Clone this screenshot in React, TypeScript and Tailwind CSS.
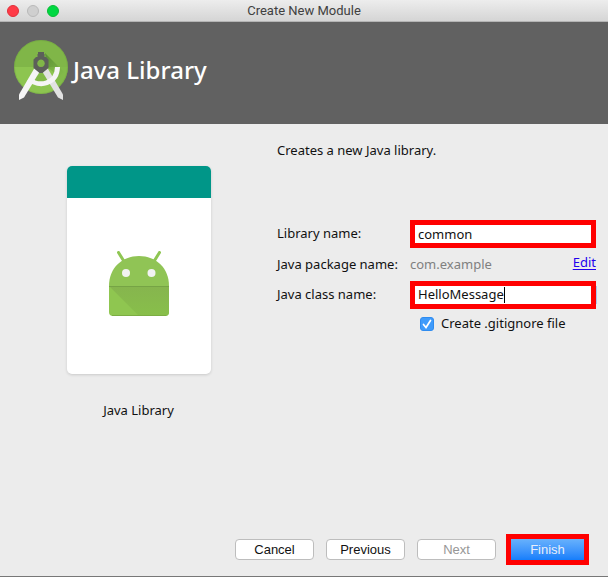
import { useState } from "react"

function StudioLogo() {
    return (
        <svg viewBox="0 0 56 62" className="h-[62px] w-14 shrink-0" aria-hidden="true">
            <defs>
                <clipPath id="logo-disc">
                    <circle cx="28" cy="28" r="27" />
                </clipPath>
                <linearGradient id="logo-shade" x1="0" y1="0" x2="1" y2="1">
                    <stop offset="0" stopColor="#33691e" stopOpacity="0.5" />
                    <stop offset="0.8" stopColor="#33691e" stopOpacity="0" />
                </linearGradient>
            </defs>
            <g clipPath="url(#logo-disc)">
                <rect width="56" height="28" fill="#80b648" />
                <rect y="28" width="56" height="30" fill="#8dc550" />
                <path d="M32 14 L55 37 L56 40 L47 38 L34 28Z" fill="url(#logo-shade)" />
                <path d="M47 28 H56 V56 H44 L36 44 Q47 38 47 28Z" fill="#689f38" opacity="0.25" />
                <path d="M27 34 L20 41 Q27 45 36 41 L31 33Z" fill="#689f38" opacity="0.3" />
            </g>
            <circle cx="28" cy="28" r="26.5" fill="none" stroke="#689f38" strokeOpacity="0.35" />
            <path d="M21.5 29 L26.500 33 L11 58.500 L6 61 L6 55.500Z" fill="#f5f5f5" />
            <path d="M34.500 29 L29.500 33 L45 58.500 L50 61 L50 55.500Z" fill="#e2e2e2" />
            <path d="M16 40 C26 49 44 45 44.500 28" fill="none" stroke="#f5f5f5" strokeWidth="5" />
            <path
                fillRule="evenodd"
                d="M24.500 18 V15 H25 V13 H31 V15 H31.500 V18 H33 L35.500 20.500 V29 L29.500 34 H26.500 L20.500 29 V20.500 L23 18Z M28 20.500 a3.800 3.800 0 1 0 0.010 0Z"
                fill="#5c5f5a"
            />
        </svg>
    )
}

function AndroidHead() {
    return (
        <svg viewBox="0 0 60 65" className="mx-auto mt-[53px] h-[65px] w-[60px]" aria-hidden="true">
            <defs>
                <linearGradient id="body-shade" x1="0" y1="0" x2="0" y2="1">
                    <stop offset="0" stopColor="#86b54e" />
                    <stop offset="1" stopColor="#88bf4a" />
                </linearGradient>
            </defs>
            <path d="M9.500 1.500 L16 12 M50.500 1.500 L44 12" stroke="#8fc653" strokeWidth="3" strokeLinecap="round" />
            <path d="M0 35 C0 17 13 5 30 5 C47 5 60 17 60 35Z" fill="#90c455" />
            <path d="M0 35 H60 V61 Q60 65 56 65 H4 Q0 65 0 61Z" fill="#8fc650" />
            <path d="M0 35 H60 V61 Q60 65 56 65 H30Z" fill="url(#body-shade)" />
            <path d="M0 35.500 H60" stroke="#76a445" />
            <path d="M3 64.500 H57" stroke="#7cad43" />
            <circle cx="17" cy="22" r="4" fill="#f2f2f2" />
            <circle cx="42.500" cy="22" r="4" fill="#f2f2f2" />
        </svg>
    )
}

export default function CreateModule() {
    const [library, setLibrary] = useState("common")
    const [className, setClassName] = useState("HelloMessage")
    const [gitignore, setGitignore] = useState(true)

    return (
        <div className="flex min-h-screen flex-col border-b border-[#777777] bg-[#ececec] font-['Noto_Sans',sans-serif] text-[13px] text-[#111111]">
            {/* Title bar */}
            <header className="grid h-[22px] grid-cols-[1fr_auto_1fr] items-center border-b border-[#b4b4b4] bg-gradient-to-b from-[#ededed] to-[#d5d5d5] px-[7px]">
                <div className="flex gap-2">
                    <button type="button" aria-label="Close" className="size-3 rounded-full border border-[#e0303a] bg-[#ff3b47]" />
                    <button type="button" aria-label="Minimize" disabled className="size-3 rounded-full border border-[#b9b9b9] bg-[#cfcfcf]" />
                    <button type="button" aria-label="Zoom" className="size-3 rounded-full border border-[#0abb35] bg-[#00d842]" />
                </div>
                <span className="pt-px font-[Roboto,sans-serif] text-[13px] text-[#404040]">Create New Module</span>
            </header>

            {/* Banner */}
            <div className="flex h-[102px] items-center bg-[#616161] px-[13px] pb-1.5">
                <StudioLogo />
                <h1 className="ml-1 text-2xl font-medium text-white">Java Library</h1>
            </div>

            <main className="grid flex-1 grid-cols-[277px_1fr]">
                {/* Template preview */}
                <figure className="pt-[42px]">
                    <div className="mx-auto h-52 w-36 overflow-hidden rounded-[5px] bg-white shadow-[0_1px_3px_rgba(0,0,0,0.15)]">
                        <div className="h-8 bg-[#009688]" />
                        <AndroidHead />
                    </div>
                    <figcaption className="mt-[26px] text-center leading-5">Java Library</figcaption>
                </figure>

                {/* Options */}
                <form className="pt-4 pr-3">
                    <p className="leading-5">Creates a new Java library.</p>
                    <div className="mt-[60px] grid grid-cols-[133px_1fr] items-center gap-y-[3px]">
                        <label htmlFor="library">Library name:</label>
                        <input
                            id="library"
                            value={library}
                            onChange={(e) => setLibrary(e.target.value)}
                            className="h-7 w-full border-[5px] border-[#ff0000] bg-white px-[3px] outline-none"
                        />

                        <span>Java package name:</span>
                        <div className="flex h-[27px] items-center justify-between">
                            <span className="text-[#808080]">com.example</span>
                            <a href="#" className="pb-1 text-[#2200ee] underline underline-offset-2">Edit</a>
                        </div>

                        <label htmlFor="class-name">Java class name:</label>
                        <div className="relative flex h-7 items-center border-[5px] border-[#ff0000] bg-white pl-[3px]">
                            <input
                                id="class-name"
                                value={className}
                                onChange={(e) => setClassName(e.target.value)}
                                className="[field-sizing:content] outline-none"
                            />
                            <span className="h-4 w-px bg-black" />
                            <span className="absolute inset-y-0 -right-1.5 w-px bg-[#a6c9f0]" />
                        </div>
                    </div>
                    <label className="mt-[5px] ml-[143px] flex h-5 items-center gap-[7px]">
                        <span className="relative">
                            <input
                                type="checkbox"
                                checked={gitignore}
                                onChange={(e) => setGitignore(e.target.checked)}
                                className="peer block size-3.5 appearance-none rounded-[3px] border border-[#a8a8a8] bg-white checked:border-[#2f8cf0] checked:bg-[#3f9bfb]"
                            />
                            <svg viewBox="0 0 14 14" className="pointer-events-none absolute inset-0 hidden size-3.5 peer-checked:block">
                                <path d="M3.500 7.500 L6 10.500 L10.500 3.500" fill="none" stroke="white" strokeWidth="1.700" strokeLinecap="round" />
                            </svg>
                        </span>
                        Create .gitignore file
                    </label>
                </form>
            </main>

            <footer className="flex items-center justify-end gap-3 pr-[19px] pb-[11px] font-['Liberation_Sans',Arial,sans-serif]">
                <button type="button" className="h-[21px] w-[79px] rounded-[4px] border border-[#bdbdbd] bg-white">Cancel</button>
                <button type="button" className="h-[21px] w-[79px] rounded-[4px] border border-[#bdbdbd] bg-white">Previous</button>
                <button type="button" disabled className="h-[21px] w-[79px] rounded-[4px] border border-[#bdbdbd] bg-white text-[#969696]">Next</button>
                <button type="button" className="-ml-0.5 h-[31px] w-[83px] border-[5px] border-[#ff0000] bg-gradient-to-b from-[#67b1fc] to-[#147efb] text-[#e8eefa]">Finish</button>
            </footer>
        </div>
    )
}
